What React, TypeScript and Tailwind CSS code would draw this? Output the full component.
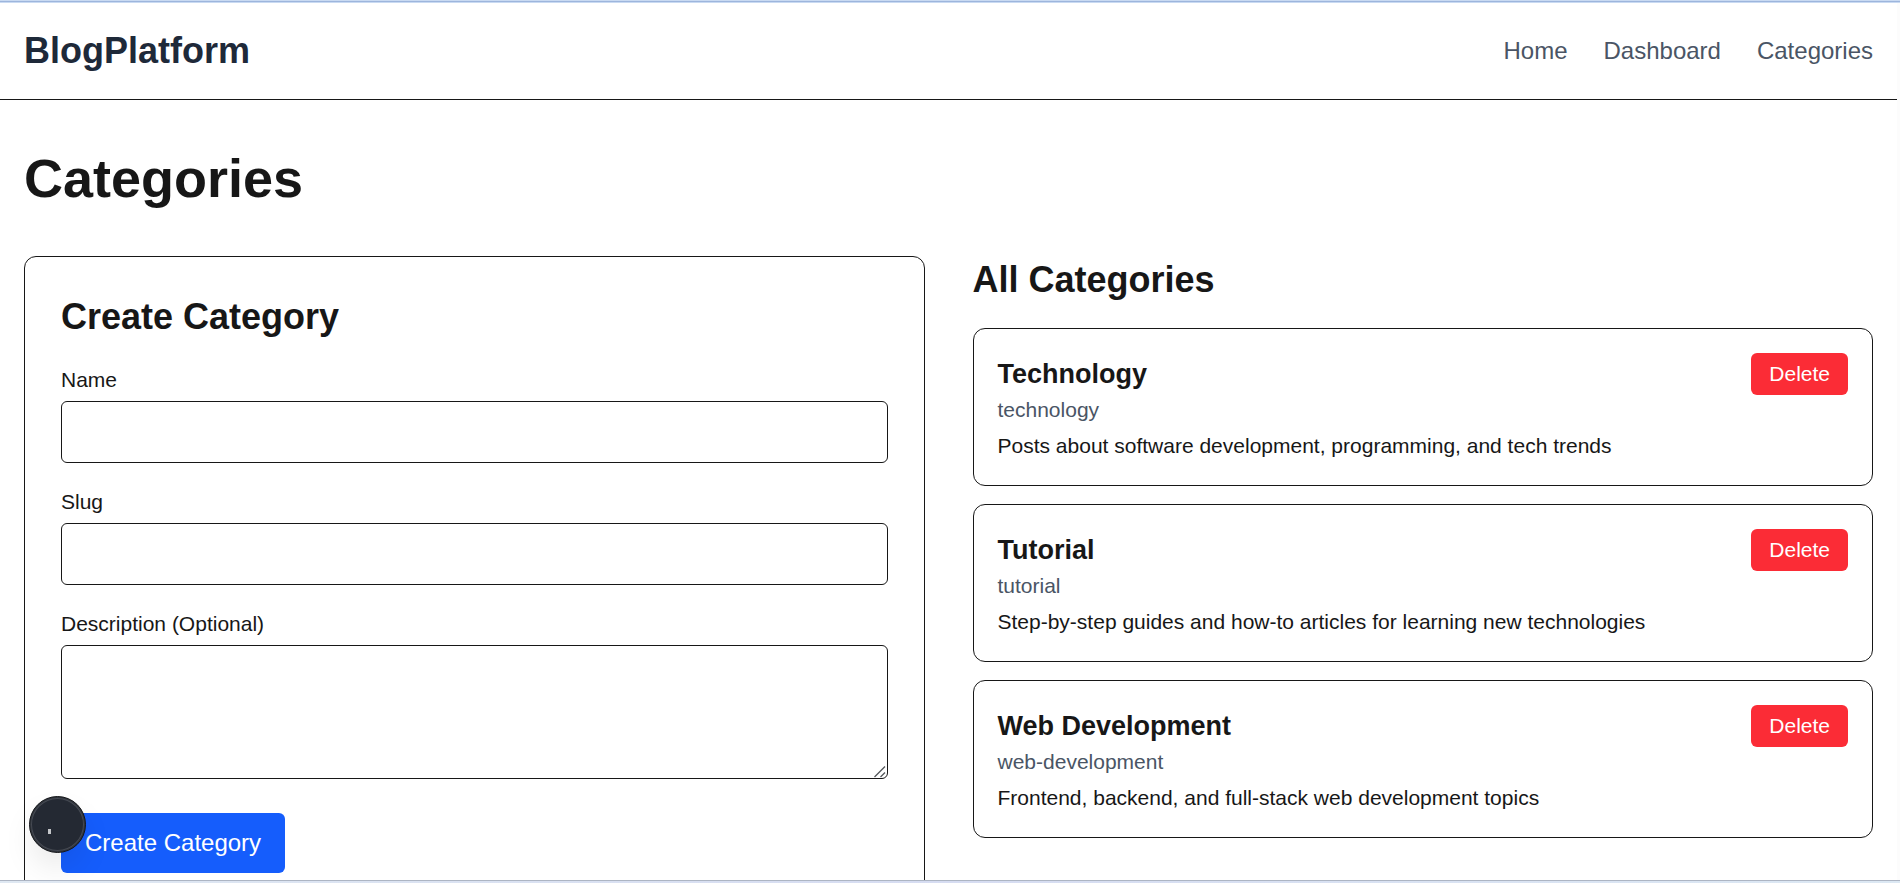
import React from "react";

type Category = { name: string; slug: string; description: string };

const categories: Category[] = [
  {
    name: "Technology",
    slug: "technology",
    description: "Posts about software development, programming, and tech trends",
  },
  {
    name: "Tutorial",
    slug: "tutorial",
    description: "Step-by-step guides and how-to articles for learning new technologies",
  },
  {
    name: "Web Development",
    slug: "web-development",
    description: "Frontend, backend, and full-stack web development topics",
  },
];

const fieldClass =
  "block w-full rounded-md border border-[#171717] bg-white px-[18px] py-3 text-[24px] leading-9 outline-none";
const labelClass = "mb-1.5 block text-[21px] leading-[30px]";

function Header() {
  return (
    <header className="border-b border-[#171717]">
      <div className="flex items-center justify-between p-6">
        <a href="#home" className="text-[36px] leading-[48px] font-bold text-gray-800">
          BlogPlatform
        </a>
        <nav className="flex gap-9 text-[24px] leading-9 text-gray-600">
          <a href="#home">Home</a>
          <a href="#dashboard">Dashboard</a>
          <a href="#categories">Categories</a>
        </nav>
      </div>
    </header>
  );
}

function CreateCategoryForm() {
  return (
    <section className="rounded-xl border border-[#171717] p-9">
      <h2 className="mb-6 text-[36px] leading-[48px] font-bold">Create Category</h2>
      <form onSubmit={(e) => e.preventDefault()}>
        <div className="mb-6">
          <label htmlFor="name" className={labelClass}>Name</label>
          <input id="name" type="text" className={fieldClass} />
        </div>
        <div className="mb-6">
          <label htmlFor="slug" className={labelClass}>Slug</label>
          <input id="slug" type="text" className={fieldClass} />
        </div>
        <div className="mb-[34px]">
          <label htmlFor="description" className={labelClass}>Description (Optional)</label>
          <div className="relative">
            <textarea id="description" rows={3} className={`${fieldClass} resize-none`} />
            <svg
              aria-hidden="true"
              viewBox="0 0 12 12"
              className="pointer-events-none absolute right-0.5 bottom-px size-3"
            >
              <path
                d="M0.5 11 L11 0.5 M6.5 11 L11 6.5"
                fill="none"
                stroke="#55585c"
                strokeWidth="1.3"
              />
            </svg>
          </div>
        </div>
        <button
          type="submit"
          className="rounded-md bg-blue-600 px-6 py-3 text-[24px] leading-9 text-white"
        >
          Create Category
        </button>
      </form>
    </section>
  );
}

function CategoryCard({ category }: { category: Category }) {
  return (
    <li className="flex items-start justify-between rounded-xl border border-[#171717] p-6">
      <div>
        <h3 className="text-[27px] leading-[42px] font-bold">{category.name}</h3>
        <p className="text-[21px] leading-[30px] text-gray-600">{category.slug}</p>
        <p className="mt-1.5 text-[21px] leading-[30px]">{category.description}</p>
      </div>
      <button
        type="button"
        className="rounded-md bg-red-500 px-[18px] py-1.5 text-[21px] leading-[30px] text-white"
      >
        Delete
      </button>
    </li>
  );
}

export default function App() {
  return (
    <div className="relative flex h-screen flex-col bg-white font-['Liberation_Sans',Arial,sans-serif] text-[#171717]">
      <div className="h-[3px] shrink-0 border-y border-[#c9daf2] bg-[#9db5dc]" />
      <div className="flex min-h-0 flex-1">
        <div className="min-w-0 flex-1 overflow-y-auto [scrollbar-width:none]">
          <Header />
          <main className="px-6 py-12">
            <h1 className="mb-12 text-[54px] leading-[60px] font-bold">Categories</h1>
            <div className="grid grid-cols-2 gap-12">
              <CreateCategoryForm />
              <section>
                <h2 className="mb-6 text-[36px] leading-[48px] font-bold">All Categories</h2>
                <ul className="flex flex-col gap-[18px]">
                  {categories.map((category) => (
                    <CategoryCard key={category.slug} category={category} />
                  ))}
                </ul>
              </section>
            </div>
          </main>
        </div>
        <div className="w-[3px] shrink-0 bg-[#fcfcfc]" />
      </div>
      <div className="h-[3px] shrink-0 border-t border-[#adb5c3] bg-linear-to-r from-[#dfe8f2] via-[#d6dcf1] to-[#dce8f3]" />
      <div className="pointer-events-none absolute inset-x-0 top-[3px] bottom-[3px] overflow-hidden">
        <button
          type="button"
          aria-label="Open developer tools"
          className="pointer-events-auto absolute bottom-[27px] left-[29px] flex size-[57px] rounded-full border border-[#15171a] bg-[#242933] shadow-[inset_0_0_0_1px_#30343c,inset_0_0_0_2px_#454952,0_16px_32px_-4px_rgba(0,0,0,0.1)]"
        >
          <span className="mt-8 ml-[18px] h-[5px] w-[3px] bg-[#c4c6ca]" />
        </button>
      </div>
    </div>
  );
}
